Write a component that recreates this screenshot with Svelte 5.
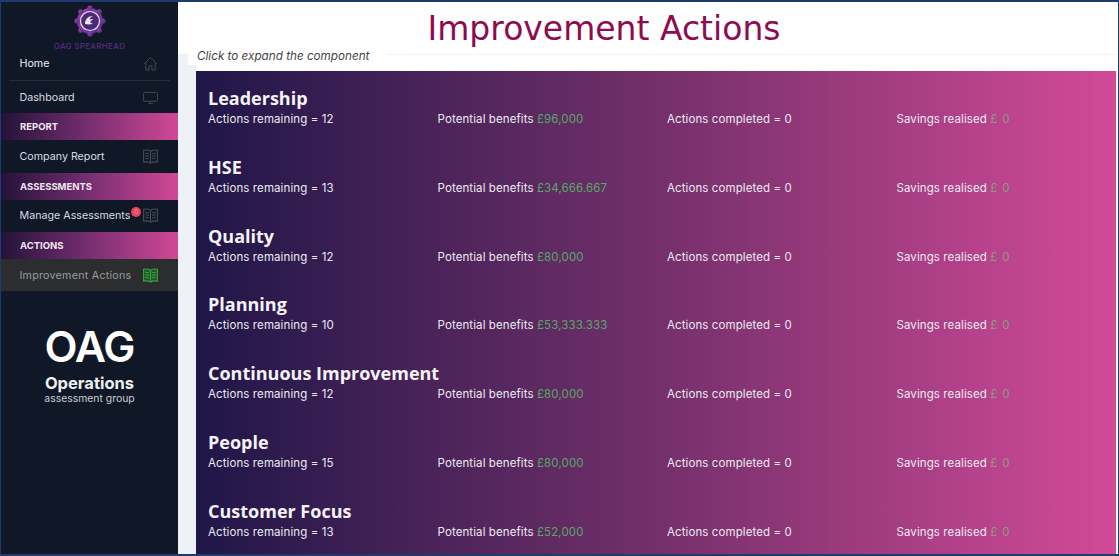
<script>
  const areas = [
    { name: "Leadership", remaining: 12, benefits: "£96,000" },
    { name: "HSE", remaining: 13, benefits: "£34,666.667" },
    { name: "Quality", remaining: 12, benefits: "£80,000" },
    { name: "Planning", remaining: 10, benefits: "£53,333.333" },
    { name: "Continuous Improvement", remaining: 12, benefits: "£80,000" },
    { name: "People", remaining: 15, benefits: "£80,000" },
    { name: "Customer Focus", remaining: 13, benefits: "£52,000" },
  ];
</script>

{#snippet book()}
  <svg class="icon" viewBox="0 0 15 15" fill="none" stroke="currentColor" stroke-width="1.100">
    <path d="M.6 1.200c2.600-.5 5-.2 6.900 1 1.900-1.200 4.300-1.500 6.900-1v11.900c-2.600-.5-5-.2-6.900 1-1.900-1.200-4.300-1.500-6.900-1z" />
    <path d="M7.500 2.200v11.900M2.300 4.200c1.300 0 2.500.2 3.600.7M2.300 6.700c1.300 0 2.500.2 3.600.7M2.300 9.200c1.300 0 2.500.2 3.600.7M12.700 4.200c-1.300 0-2.500.2-3.600.7M12.700 6.700c-1.300 0-2.500.2-3.600.7M12.700 9.200c-1.300 0-2.500.2-3.600.7" />
  </svg>
{/snippet}

<div class="frame">
  <aside class="sidebar">
    <div class="brand">
      <svg class="gear" viewBox="0 0 32 32">
        <defs>
          <linearGradient id="gear-fill" x1="0" y1="0" x2="1" y2="1">
            <stop offset="0" stop-color="#a0409f" />
            <stop offset="1" stop-color="#4a2f8c" />
          </linearGradient>
        </defs>
        <circle cx="16" cy="16" r="13" fill="url(#gear-fill)" />
        <g fill="url(#gear-fill)">
          <circle cx="16" cy="3" r="2.600" />
          <circle cx="25.200" cy="6.800" r="2.600" />
          <circle cx="29" cy="16" r="2.600" />
          <circle cx="25.200" cy="25.200" r="2.600" />
          <circle cx="16" cy="29" r="2.600" />
          <circle cx="6.800" cy="25.200" r="2.600" />
          <circle cx="3" cy="16" r="2.600" />
          <circle cx="6.800" cy="6.800" r="2.600" />
        </g>
        <circle cx="16" cy="16" r="9.500" fill="#4a2a78" stroke="#e9e3f0" stroke-width="1.200" />
        <path d="M11 19c0-5 3-8 8-8-2 1-3 2-3.500 3.500 1.500-.5 3-.5 4 0-2 .5-3 1.500-3.500 3 1 0 2 .5 2.500 1.500-2.500.5-5 .5-7.500 0z" fill="#e9e3f0" />
      </svg>
      <span class="brand-name">OAG SPEARHEAD</span>
    </div>

    <nav>
      <a class="item home">
        <span>Home</span>
        <svg class="icon" viewBox="0 0 16 16" fill="none" stroke="currentColor" stroke-width="1">
          <path d="M1 8.500 8 1.500l7 7M3 6.500v8.500h3.500v-4.500h3V15H13V6.500" />
        </svg>
      </a>
      <a class="item">
        <span>Dashboard</span>
        <svg class="icon" viewBox="0 0 16 16" fill="none" stroke="currentColor" stroke-width="1">
          <rect x=".6" y="2.500" width="14.800" height="9.500" rx="1" />
          <path d="M5.500 14.500h5M8 12v2.500" />
        </svg>
      </a>
      <div class="section">REPORT</div>
      <a class="item">
        <span>Company Report</span>
        {@render book()}
      </a>
      <div class="section">ASSESSMENTS</div>
      <a class="item">
        <span class="with-badge">Manage Assessments<i class="badge">0</i></span>
        {@render book()}
      </a>
      <div class="section">ACTIONS</div>
      <a class="item active">
        <span>Improvement Actions</span>
        {@render book()}
      </a>
    </nav>

    <div class="logo">
      <span class="logo-mark">OAG</span>
      <span class="logo-ops">Operations</span>
      <span class="logo-group">assessment group</span>
    </div>
  </aside>

  <main class="content">
    <header class="top">
      <h1>Improvement Actions</h1>
      <p class="hint">Click to expand the component</p>
    </header>

    <div class="body">
      <section class="panel">
        {#each areas as area}
          <article class="row">
            <h2>{area.name}</h2>
            <div class="stats">
              <span>Actions remaining = {area.remaining}</span>
              <span>Potential benefits <b>{area.benefits}</b></span>
              <span>Actions completed = 0</span>
              <span>Savings realised <b class="muted">£ 0</b></span>
            </div>
          </article>
        {/each}
      </section>
    </div>
  </main>
</div>

<style>
  :global(body) {
    margin: 0;
    background: #fff;
  }

  .frame {
    box-sizing: border-box;
    width: 1119px;
    height: 556px;
    display: flex;
    overflow: hidden;
    border: solid #1f3a6e;
    border-width: 2px 1px 2px 1px;
    font-family: Inter, "Open Sans", sans-serif;
  }

  .sidebar {
    width: 177px;
    flex: none;
    background: #101827;
    color: #d8dbe2;
    display: flex;
    flex-direction: column;
  }

  .brand {
    height: 46px;
    display: flex;
    flex-direction: column;
    align-items: center;
    padding-top: 3px;
    box-sizing: border-box;
  }

  .gear {
    width: 32px;
    height: 32px;
    flex: none;
  }

  .brand-name {
    font-size: 8px;
    line-height: 10px;
    margin-top: 4px;
    letter-spacing: 0.3px;
    color: #5a2a80;
    font-weight: 500;
    white-space: nowrap;
  }

  nav {
    display: flex;
    flex-direction: column;
  }

  .item {
    height: 32.300px;
    padding: 0 20px 0 18.500px;
    display: flex;
    align-items: center;
    justify-content: space-between;
    font-size: 10.700px;
    color: #d8dbe2;
    white-space: nowrap;
  }

  .home {
    height: 33px;
    box-sizing: border-box;
    border-bottom: 1px solid #262d3d;
    margin: 0 8px;
    padding: 0 12px 2px 10.500px;
    color: #eceef2;
  }

  .icon {
    width: 15px;
    height: 15px;
    flex: none;
    color: #454a55;
  }

  .section {
    height: 27px;
    padding-left: 19px;
    display: flex;
    align-items: center;
    font-size: 9.500px;
    font-weight: 700;
    color: #f1e6f0;
    background: linear-gradient(90deg, #241238 0%, #6e2c6c 45%, #d24897 100%);
  }

  .with-badge {
    position: relative;
  }

  .badge {
    position: absolute;
    right: -11px;
    top: -2px;
    width: 10px;
    height: 10px;
    border-radius: 50%;
    background: #f0405f;
    color: #f6a0b0;
    font-size: 6px;
    font-style: normal;
    line-height: 10px;
    text-align: center;
  }

  .active {
    background: #2c2d2e;
    color: #9a9c9f;
    letter-spacing: 0.25px;
  }

  .active .icon {
    color: #3fa03f;
    fill: #1f5a28;
  }

  .logo {
    margin-top: 33px;
    display: flex;
    flex-direction: column;
    align-items: center;
    color: #fff;
  }

  .logo-mark {
    font-size: 43px;
    line-height: 44px;
    font-weight: 600;
    letter-spacing: -1px;
  }

  .logo-ops {
    font-size: 16.500px;
    line-height: 20px;
    font-weight: 700;
    margin-top: 5px;
    color: #eef0f3;
  }

  .logo-group {
    font-size: 10.400px;
    line-height: 11px;
    color: #c9ccd2;
  }

  .content {
    flex: 1;
    min-width: 0;
    display: flex;
    flex-direction: column;
    background: #fff;
  }

  .top {
    position: relative;
    height: 52px;
    flex: none;
    border-bottom: 1px solid #f2f2f2;
    text-align: center;
  }

  h1 {
    margin: 0;
    padding-right: 88px;
    font-family: "DejaVu Sans", sans-serif;
    font-size: 33px;
    font-weight: 400;
    line-height: 53px;
    color: #8e0b50;
  }

  .hint {
    position: absolute;
    left: 10px;
    top: 45px;
    margin: 0;
    width: 200px;
    height: 18px;
    padding-left: 9px;
    box-sizing: border-box;
    background: #fff;
    font-size: 11.700px;
    line-height: 18px;
    font-style: italic;
    text-align: left;
    color: #444;
  }

  .body {
    flex: 1;
    min-height: 0;
    display: flex;
    border-left: 18px solid #eef1f6;
    padding: 16px 2px 0 0;
  }

  .panel {
    flex: 1;
    padding: 13px 0 0 12px;
    background: linear-gradient(90deg, #1f1648 0%, #6e2e68 47%, #d24a98 100%);
    overflow: hidden;
  }

  .row {
    height: 68.800px;
    color: #eceaf0;
  }

  h2 {
    margin: 0;
    font-family: "Open Sans", sans-serif;
    font-size: 18px;
    font-weight: 700;
    line-height: 28px;
    color: #f6f3f7;
  }

  .stats {
    display: grid;
    grid-template-columns: repeat(4, 229.500px);
    font-size: 11.500px;
    line-height: 15px;
    letter-spacing: 0.1px;
    white-space: nowrap;
  }

  b {
    font-weight: 400;
    color: #58a868;
  }

  b.muted {
    color: #8f9a80;
    letter-spacing: 0.8px;
  }
</style>
